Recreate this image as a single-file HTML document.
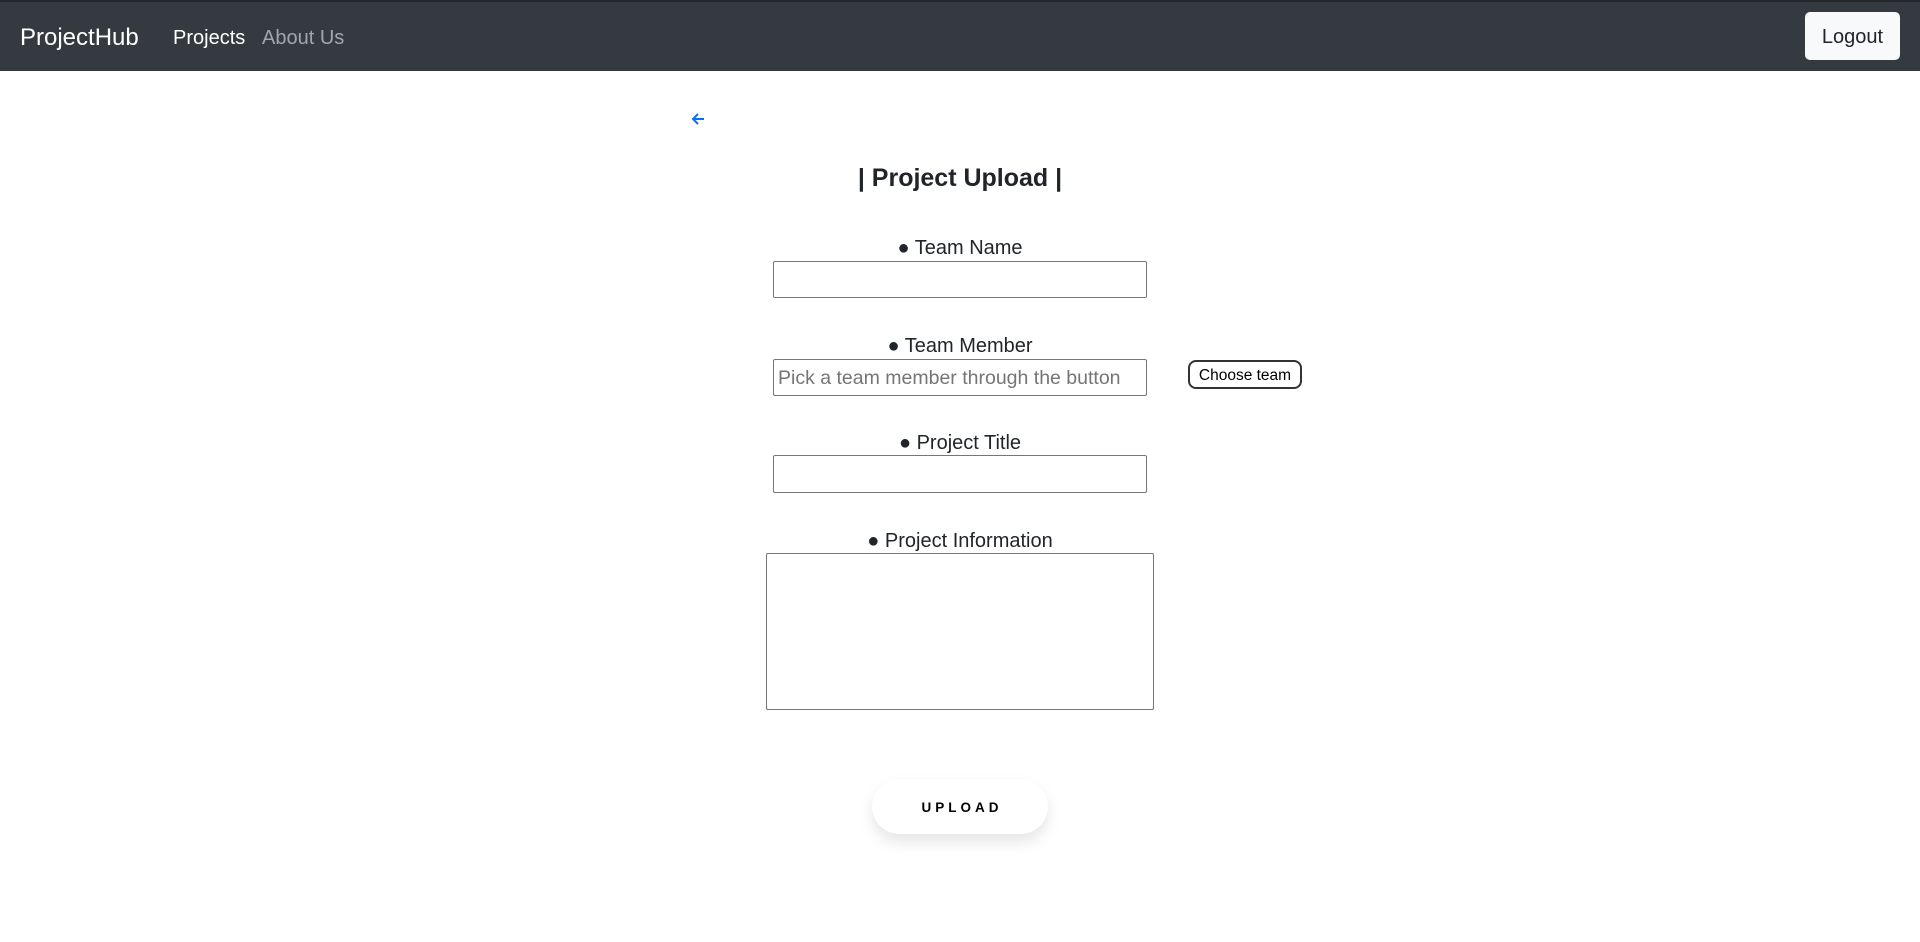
<!DOCTYPE html>
<html><head><meta charset="utf-8"><style>
*{box-sizing:border-box;margin:0;padding:0}
body{width:1920px;height:942px;background:#fff;font-family:"Segoe UI","Liberation Sans",sans-serif;color:#212529;position:relative;overflow:hidden}
.nav{position:absolute;left:0;top:0;width:1920px;height:71px;background:#343a40;border-top:2px solid #23272b}
.a{position:absolute;white-space:nowrap}
.lbl{position:absolute;width:1920px;left:0;text-align:center;font-size:20px;line-height:24px}
.inp{position:absolute;border:1px solid #767676;border-radius:2px;background:#fff}
</style></head><body>
<div class="nav">
<div class="a" style="left:20px;top:22px;font-size:24px;color:#fff">ProjectHub</div>
<div class="a" style="left:173px;top:25px;font-size:20px;color:#fff">Projects</div>
<div class="a" style="left:262px;top:25px;font-size:20px;color:rgba(255,255,255,.55)">About Us</div>
<div class="a" style="left:1805px;top:10px;width:95px;height:48px;background:#f8f9fa;border-radius:5px;font-size:20px;line-height:50px;text-align:center;color:#212529">Logout</div>
</div>
<svg class="a" style="left:690px;top:111px" width="16" height="16" viewBox="0 0 16 16"><path d="M14 8H3M8 3L3 8l5 5" stroke="#0d6efd" stroke-width="2" fill="none"/></svg>
<div class="lbl" style="top:163px;font-size:25px;line-height:30px;font-weight:600">| Project Upload |</div>
<div class="lbl" style="top:236px">● Team Name</div>
<div class="inp" style="left:773px;top:261px;width:374px;height:37px"></div>
<div class="lbl" style="top:334px">● Team Member</div>
<div class="inp" style="left:773px;top:359px;width:374px;height:37px;font-size:19.5px;color:#757575;padding:7px 0 0 4px;white-space:nowrap;overflow:hidden">Pick a team member through the button</div>
<div class="a" style="left:1188px;top:360px;width:114px;height:29px;border:2px solid #333;border-radius:8px;font-size:15.5px;line-height:27px;text-align:center;color:#000;background:#fff">Choose team</div>
<div class="lbl" style="top:431px">● Project Title</div>
<div class="inp" style="left:773px;top:455px;width:374px;height:38px"></div>
<div class="lbl" style="top:529px">● Project Information</div>
<div class="inp" style="left:766px;top:553px;width:388px;height:157px"></div>
<div class="a" style="left:872px;top:779px;width:176px;height:55px;border-radius:28px;background:#fff;box-shadow:0 8px 15px rgba(0,0,0,.1);font-size:13.5px;font-weight:700;letter-spacing:4px;text-align:center;line-height:57px;color:#000;padding-left:4px">UPLOAD</div>
</body></html>
